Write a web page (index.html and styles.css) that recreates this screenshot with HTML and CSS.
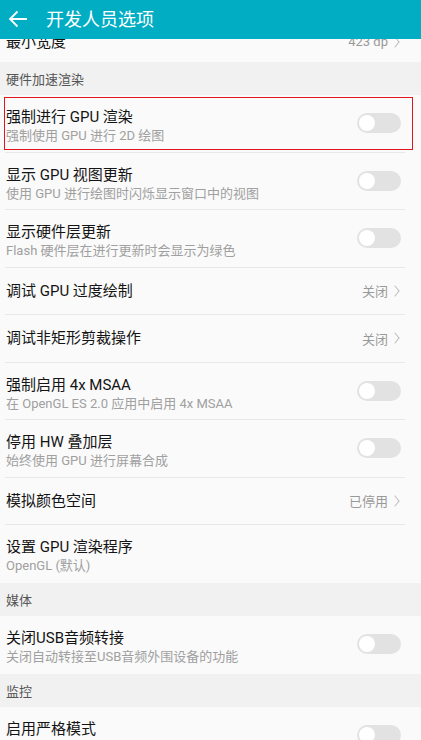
FILE: index.html
```html
<!DOCTYPE html>
<html lang="zh-CN">
<head>
  <meta charset="UTF-8">
  <title>开发人员选项</title>
  <link rel="stylesheet" href="styles.css">
</head>
<body>

  <div class="toolbar">
    <svg class="back" width="20" height="20" viewBox="0 0 20 20">
      <path d="M19 10H2M9.5 2.5L2 10l7.5 7.5" fill="none" stroke="#fff" stroke-width="1.8"/>
    </svg>
    <span class="toolbar-title">开发人员选项</span>
  </div>

  <div class="list">
    <div class="row single cut">
      <span class="title">最小宽度</span>
      <span class="value">423 dp <i class="chev"></i></span>
    </div>

    <div class="section">硬件加速渲染</div>

    <div class="row double hl">
      <div class="text">
        <div class="title">强制进行 GPU 渲染</div>
        <div class="sub">强制使用 GPU 进行 2D 绘图</div>
      </div>
      <span class="switch"></span>
    </div>

    <div class="row double">
      <div class="text">
        <div class="title">显示 GPU 视图更新</div>
        <div class="sub">使用 GPU 进行绘图时闪烁显示窗口中的视图</div>
      </div>
      <span class="switch"></span>
    </div>

    <div class="row double">
      <div class="text">
        <div class="title">显示硬件层更新</div>
        <div class="sub">Flash 硬件层在进行更新时会显示为绿色</div>
      </div>
      <span class="switch"></span>
    </div>

    <div class="row single">
      <span class="title">调试 GPU 过度绘制</span>
      <span class="value">关闭 <i class="chev"></i></span>
    </div>

    <div class="row single">
      <span class="title">调试非矩形剪裁操作</span>
      <span class="value">关闭 <i class="chev"></i></span>
    </div>

    <div class="row double">
      <div class="text">
        <div class="title">强制启用 4x MSAA</div>
        <div class="sub">在 OpenGL ES 2.0 应用中启用 4x MSAA</div>
      </div>
      <span class="switch"></span>
    </div>

    <div class="row double">
      <div class="text">
        <div class="title">停用 HW 叠加层</div>
        <div class="sub">始终使用 GPU 进行屏幕合成</div>
      </div>
      <span class="switch"></span>
    </div>

    <div class="row single">
      <span class="title">模拟颜色空间</span>
      <span class="value">已停用 <i class="chev"></i></span>
    </div>

    <div class="row double last">
      <div class="text">
        <div class="title">设置 GPU 渲染程序</div>
        <div class="sub">OpenGL (默认)</div>
      </div>
    </div>

    <div class="section">媒体</div>

    <div class="row double last">
      <div class="text">
        <div class="title">关闭USB音频转接</div>
        <div class="sub">关闭自动转接至USB音频外围设备的功能</div>
      </div>
      <span class="switch"></span>
    </div>

    <div class="section">监控</div>

    <div class="row double">
      <div class="text">
        <div class="title">启用严格模式</div>
        <div class="sub">应用在主线程上执行长时间操作时闪烁屏幕</div>
      </div>
      <span class="switch"></span>
    </div>
  </div>

</body>
</html>
```

FILE: styles.css
```css
body {
  margin: 0;
  font-family: Roboto, "Noto Sans CJK SC", sans-serif;
  background-color: #fafafa;
  color: #141414;
  overflow: hidden;
}

.toolbar {
  position: fixed;
  top: 0;
  left: 0;
  right: 0;
  height: 39px;
  background-color: #01adc3;
  display: flex;
  align-items: center;
  z-index: 2;
}

.back {
  margin-left: 8px;
  margin-top: -2px;
}

.toolbar-title {
  margin-left: 18px;
  margin-top: -4px;
  color: #fff;
  font-size: 18px;
}

.list {
  padding-top: 14px;
}

.section {
  height: 33.5px;
  box-sizing: border-box;
  padding: 0 6px;
  display: flex;
  align-items: center;
  background-color: #f1f1f1;
  color: #555;
  font-size: 13px;
}

.row {
  position: relative;
  display: flex;
  align-items: center;
  justify-content: space-between;
  box-sizing: border-box;
  margin: 0 16px 0 5px;
  padding-left: 1px;
  border-bottom: 1px solid #e8e8e8;
}

.row.last {
  border-bottom: none;
}

.row.single {
  height: 47.5px;
}

.row.cut {
  padding-top: 8px;
  border-bottom: none;
}

.row.double {
  height: 57.5px;
  align-items: flex-start;
  padding-top: 12px;
}

.title {
  font-size: 15px;
  line-height: 20px;
}

.sub {
  font-size: 13px;
  line-height: 18px;
  color: #a0a0a0;
}

.value {
  font-size: 13px;
  color: #999;
  display: flex;
  align-items: center;
  margin-right: 6px;
}

.chev {
  display: inline-block;
  width: 7px;
  height: 7px;
  margin-left: 3px;
  border-top: 1px solid #bbb;
  border-right: 1px solid #bbb;
  transform: scaleX(0.8) rotate(45deg);
}

.switch {
  position: relative;
  width: 44px;
  height: 20px;
  margin-top: 6px;
  margin-right: 4px;
  border-radius: 10px;
  background-color: #e2e2e2;
}

.switch::after {
  content: "";
  position: absolute;
  left: 2px;
  top: 2px;
  width: 16px;
  height: 16px;
  border-radius: 50%;
  background-color: #fff;
}

.hl::before {
  content: "";
  position: absolute;
  left: -1px;
  right: -8px;
  top: 2px;
  bottom: 2px;
  border: 1px solid #e3141a;
}
```
